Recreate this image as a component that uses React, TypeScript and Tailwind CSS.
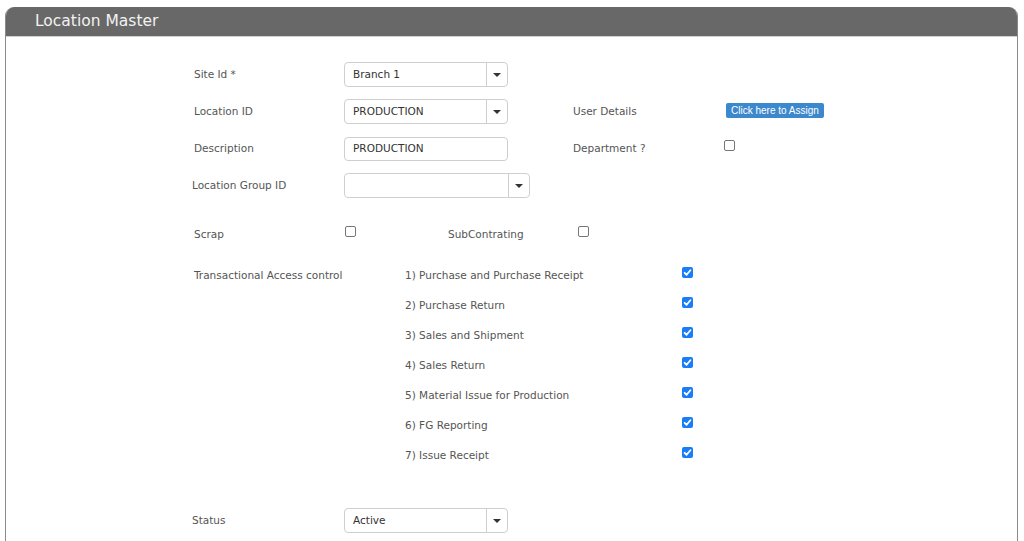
import React from 'react';

const font = { fontFamily: '"DejaVu Sans", Verdana, sans-serif' };

const Caret = () => (
  <svg width="8" height="4" viewBox="0 0 8 4" className="block">
    <path d="M0 0 L8 0 L4 4 Z" fill="#333" />
  </svg>
);

const SelectBox = ({ value, width }: { value: string; width: string }) => (
  <div className={`flex h-[25px] ${width} rounded-[4px] border border-[#cfcfcf] bg-white`}>
    <div className="flex flex-1 items-center pl-[8px] text-[10.5px] text-[#333]">{value}</div>
    <div className="flex w-[21px] items-center justify-center border-l border-[#cfcfcf]">
      <Caret />
    </div>
  </div>
);

const Box = ({ checked = false, className = '' }: { checked?: boolean; className?: string }) =>
  checked ? (
    <div className={`flex h-[11px] w-[11px] items-center justify-center rounded-[2px] bg-[#1a7cf6] ${className}`}>
      <svg width="9" height="9" viewBox="0 0 9 9">
        <path d="M1.6 4.8 L3.6 6.8 L7.4 2.2" fill="none" stroke="#fff" strokeWidth="1.8" strokeLinecap="round" strokeLinejoin="round" />
      </svg>
    </div>
  ) : (
    <div className={`h-[11px] w-[11px] rounded-[2px] border border-[#767676] bg-white ${className}`} />
  );

const accessItems = [
  '1) Purchase and Purchase Receipt',
  '2) Purchase Return',
  '3) Sales and Shipment',
  '4) Sales Return',
  '5) Material Issue for Production',
  '6) FG Reporting',
  '7) Issue Receipt',
];

export default function App() {
  return (
    <div className="min-h-[541px] bg-white pt-[7px] pl-[5px] pr-[6px]" style={font}>
      <div className="h-[534px] overflow-hidden rounded-t-[9px] border-x border-[#8a8a8a] bg-white">
        {/* Header */}
        <div className="flex h-[30px] items-center border-b border-[#d0d0d0] bg-[#686868] pl-[29px] text-[15.5px] text-[#f2f2f2]">
          Location Master
        </div>

        {/* Form */}
        <div className="pl-[186px] pt-[19px] text-[10.5px] text-[#555]">
          <div className="flex h-[37px] items-center">
            <div className="w-[152px] pl-[2px]">Site Id *</div>
            <SelectBox value="Branch 1" width="w-[164px]" />
          </div>

          <div className="flex h-[37px] items-center">
            <div className="w-[152px] pl-[2px]">Location ID</div>
            <div className="w-[229px]">
              <SelectBox value="PRODUCTION" width="w-[164px]" />
            </div>
            <div className="w-[153px]">User Details</div>
            <button className="mb-[3px] h-[15px] rounded-[2px] bg-[#3b88cc] px-[5px] text-[10px] font-medium leading-[15px] text-white" style={{ fontFamily: '"Liberation Sans", Arial, sans-serif' }}>
              Click here to Assign
            </button>
          </div>

          <div className="flex h-[37px] items-center">
            <div className="w-[152px] pl-[2px]">Description</div>
            <div className="w-[229px]">
              <div className="flex h-[24px] w-[164px] items-center rounded-[4px] border border-[#cfcfcf] pl-[8px] text-[#333]">
                PRODUCTION
              </div>
            </div>
            <div className="w-[151px]">Department ?</div>
            <Box className="mb-[7px]" />
          </div>

          <div className="flex h-[37px] items-center">
            <div className="w-[152px]">Location Group ID</div>
            <SelectBox value="" width="w-[186px]" />
          </div>

          <div className="mt-[12px] flex h-[37px] items-center">
            <div className="w-[153px] pl-[2px]">Scrap</div>
            <Box className="mb-[7px]" />
            <div className="w-[92px]" />
            <div className="w-[130px]">SubContrating</div>
            <Box className="mb-[7px]" />
          </div>

          <div className="mt-[8px] flex">
            <div className="flex h-[30px] w-[213px] items-center pl-[2px]">Transactional Access control</div>
            <div>
              {accessItems.map((item) => (
                <div key={item} className="flex h-[30px] items-center">
                  <div className="w-[277px]">{item}</div>
                  <Box checked className="mb-[7px]" />
                </div>
              ))}
            </div>
          </div>

          <div className="mt-[31px] flex h-[37px] items-center">
            <div className="w-[152px]">Status</div>
            <SelectBox value="Active" width="w-[164px]" />
          </div>
        </div>
      </div>
    </div>
  );
}
